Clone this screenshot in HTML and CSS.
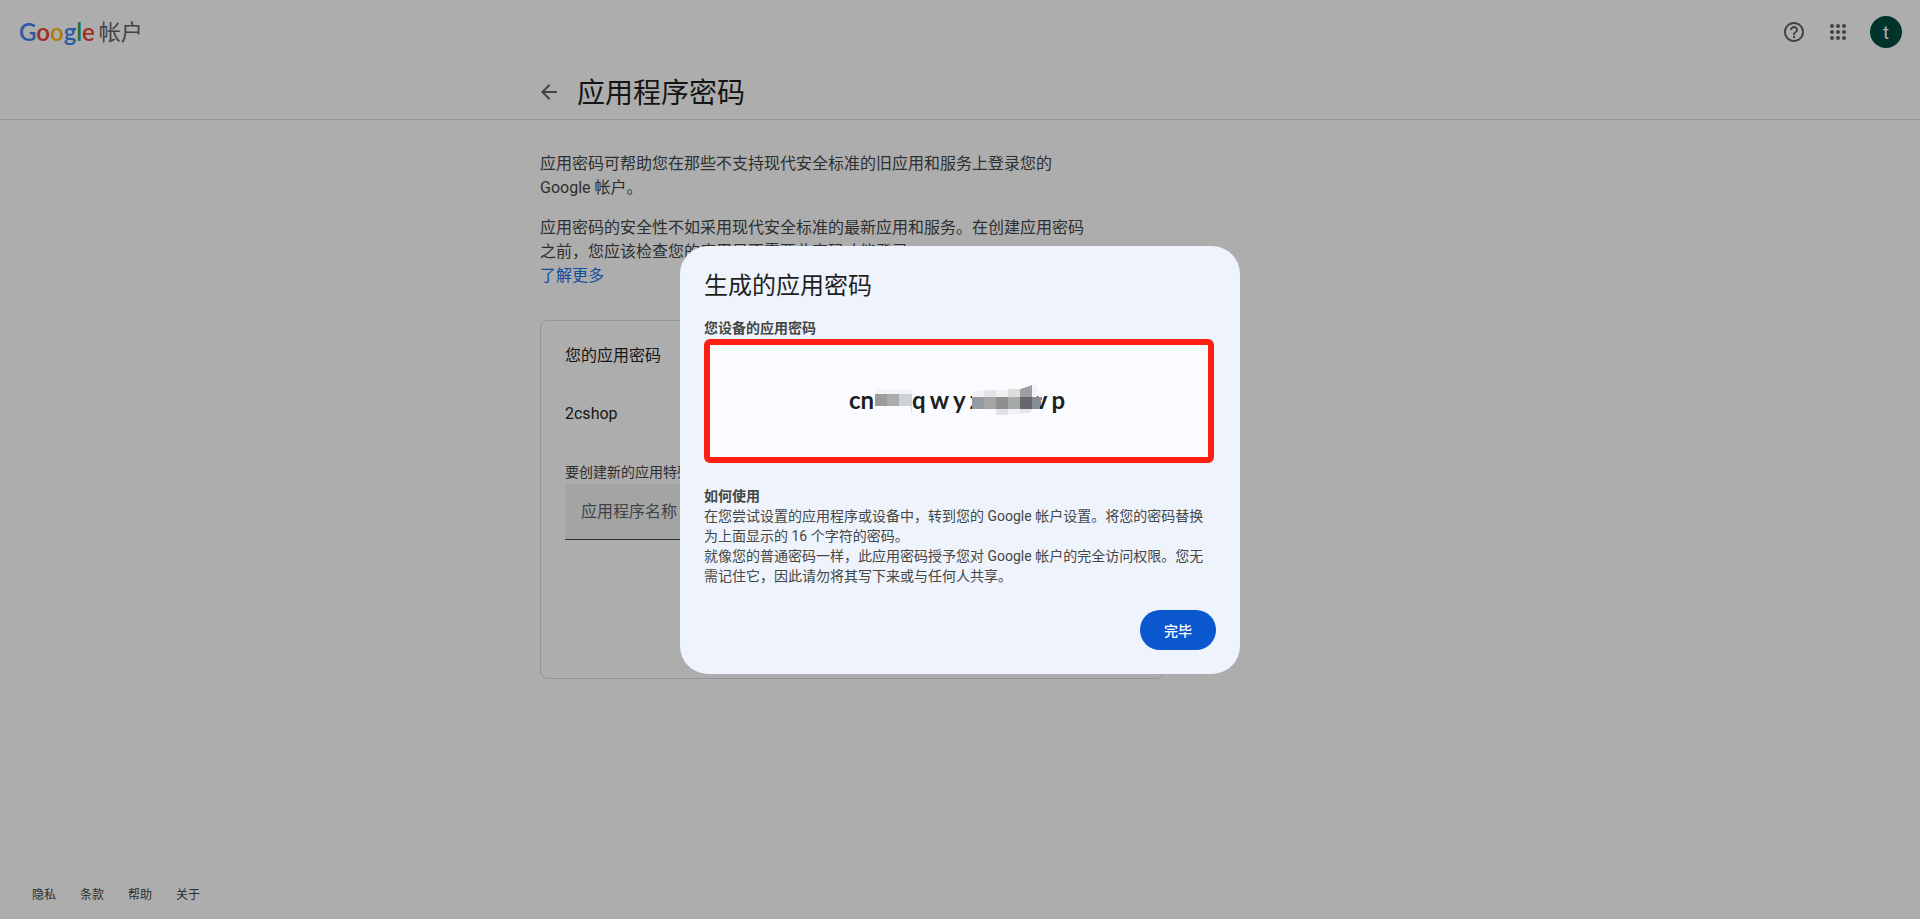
FILE: index.html
```
<!DOCTYPE html>
<html lang="zh-CN">
<head>
  <meta charset="UTF-8" />
  <meta name="viewport" content="width=device-width, initial-scale=1.0" />
  <title>应用程序密码</title>
  <link rel="stylesheet" href="styles.css">
</head>
<body>
  <header>
    <div class="topbar">
      <a class="brand" href="#">
        <span class="logo"><span class="blue">G</span><span class="red">o</span><span class="yellow">o</span><span class="blue">g</span><span class="green">l</span><span class="red">e</span></span>
        <span class="product">帐户</span>
      </a>
      <div class="actions">
        <button class="icon-btn" aria-label="帮助">
          <svg width="24" height="24" viewBox="0 0 24 24"><path d="M11 18h2v-2h-2v2zm1-16C6.48 2 2 6.48 2 12s4.480 10 10 10 10-4.480 10-10S17.520 2 12 2zm0 18c-4.410 0-8-3.590-8-8s3.590-8 8-8 8 3.590 8 8-3.590 8-8 8zm0-14c-2.210 0-4 1.790-4 4h2c0-1.100.9-2 2-2s2 .9 2 2c0 2-3 1.750-3 5h2c0-2.250 3-2.500 3-5 0-2.210-1.790-4-4-4z"/></svg>
        </button>
        <button class="icon-btn" aria-label="Google 应用">
          <svg width="24" height="24" viewBox="0 0 24 24"><circle cx="6" cy="6" r="2"/><circle cx="12" cy="6" r="2"/><circle cx="18" cy="6" r="2"/><circle cx="6" cy="12" r="2"/><circle cx="12" cy="12" r="2"/><circle cx="18" cy="12" r="2"/><circle cx="6" cy="18" r="2"/><circle cx="12" cy="18" r="2"/><circle cx="18" cy="18" r="2"/></svg>
        </button>
        <button class="avatar">t</button>
      </div>
    </div>
    <div class="titlebar">
      <a class="back" href="#" aria-label="返回">
        <svg width="24" height="24" viewBox="0 0 24 24"><path d="M20 11H7.830l5.590-5.590L12 4l-8 8 8 8 1.410-1.410L7.830 13H20v-2z"/></svg>
      </a>
      <h1>应用程序密码</h1>
    </div>
  </header>

  <main>
    <div class="intro">
      <p>应用密码可帮助您在那些不支持现代安全标准的旧应用和服务上登录您的 Google 帐户。</p>
      <p>应用密码的安全性不如采用现代安全标准的最新应用和服务。在创建应用密码之前，您应该检查您的应用是否需要此密码才能登录。<br><a href="#">了解更多</a></p>
    </div>

    <section class="card">
      <h2>您的应用密码</h2>
      <div class="app-name">2cshop</div>
      <label for="appName">要创建新的应用特殊密码，请在下方输入相应的名称…</label>
      <input id="appName" type="text" placeholder="应用程序名称">
    </section>
  </main>

  <footer>
    <a href="#">隐私</a>
    <a href="#">条款</a>
    <a href="#">帮助</a>
    <a href="#">关于</a>
  </footer>

  <div class="overlay">
    <div class="dialog" role="dialog" aria-modal="true" aria-labelledby="dialogTitle">
      <h2 id="dialogTitle">生成的应用密码</h2>
      <h3>您设备的应用密码</h3>
      <div class="password">
        <span>cn</span>
        <svg class="mosaic" width="37" height="26" viewBox="0 0 37 26" shape-rendering="crispEdges">
          <path fill="#f3f4f7" d="M0 2h37v5H0z"/>
          <path fill="#9f9b99" d="M0 7h12v12H0z"/>
          <path fill="#acacac" d="M12 7h12v12H12z"/>
          <path fill="#ced2d5" d="M24 7h13v12H24z"/>
          <path fill="#dfe2e6" d="M36 19h1v7h-1z"/>
        </svg>
        <span>q</span>
        <span>w</span>
        <span>y</span>
        <span>z</span>
        <svg class="mosaic mosaic-long" width="74" height="30" viewBox="0 0 74 30" shape-rendering="crispEdges">
          <path fill="#f0f1f4" d="M0 6h12v6H0z"/>
          <path fill="#e4e5e7" d="M12 5h12v7H12z"/>
          <path fill="#eff0f4" d="M24 5h12v7H24z"/>
          <path fill="#dddddc" d="M36 4h12v8H36z"/>
          <path fill="#9f9fa3" d="M48 4l12-4v12H48z"/>
          <path fill="#f2f2f6" d="M60 0h5v12h-5z"/>
          <path fill="#959aa4" d="M0 12h12v12H0z"/>
          <path fill="#a5a5a5" d="M12 12h12v12H12z"/>
          <path fill="#918f8e" d="M24 12h12v12H24z"/>
          <path fill="#a6aaa9" d="M36 12h12v12H36z"/>
          <path fill="#68666d" d="M48 12h12v12H48z"/>
          <path fill="#878b94" d="M60 12h10l-2 12h-8z"/>
          <path fill="#e1e2e6" d="M24 24h12v6H24z"/>
          <path fill="#f1f2f5" d="M36 24h12v5H36z"/>
          <path fill="#e5e6eb" d="M48 24h12l-3 4h-9z"/>
        </svg>
        <span class="under">v</span>
        <span>p</span>
      </div>
      <h3>如何使用</h3>
      <p>在您尝试设置的应用程序或设备中，转到您的 Google 帐户设置。将您的密码替换为上面显示的 16 个字符的密码。</p>
      <p>就像您的普通密码一样，此应用密码授予您对 Google 帐户的完全访问权限。您无需记住它，因此请勿将其写下来或与任何人共享。</p>
      <div class="dialog-actions">
        <button class="done">完毕</button>
      </div>
    </div>
  </div>
</body>
</html>
```
FILE: styles.css
```
* {
  box-sizing: border-box;
}

body {
  font-family: Roboto, 'Noto Sans CJK SC', sans-serif;
  font-size: 16px;
  line-height: 24px;
  background-color: #fff;
  color: #444746;
  margin: 0;
  min-height: 100vh;
  display: flex;
  flex-direction: column;
}

h1, h2, h3, p {
  margin: 0;
  font-weight: 400;
}

a {
  color: #1a73e8;
  text-decoration: none;
}

button {
  border: 0;
  padding: 0;
  font-family: inherit;
  background: none;
  cursor: pointer;
}

svg {
  display: block;
  fill: #5f6368;
}

header {
  border-bottom: 1px solid #dadce0;
}

.topbar {
  display: flex;
  align-items: center;
  justify-content: space-between;
  height: 64px;
  padding: 0 18px;
}

.brand {
  display: flex;
  align-items: center;
  gap: 4px;
  padding-left: 1px;
}

.logo {
  font-family: Lato, sans-serif;
  font-size: 24px;
  font-weight: 600;
}

.blue { color: #4285f4; }
.red { color: #ea4335; }
.yellow { color: #fbbc04; }
.green { color: #34a853; }

.product {
  padding-top: 2px;
  font-size: 22px;
  color: #5f6368;
}

.actions {
  display: flex;
  align-items: center;
  gap: 20px;
}

.avatar {
  width: 32px;
  height: 32px;
  border-radius: 50%;
  background-color: #004d40;
  color: #fff;
  font-size: 18px;
}

.titlebar {
  display: flex;
  align-items: center;
  gap: 16px;
  width: 100%;
  max-width: 840px;
  height: 55px;
  margin: 0 auto;
}

.back {
  margin-left: -3px;
}

h1 {
  padding-top: 4px;
  font-size: 28px;
  line-height: 36px;
  color: #1f1f1f;
}

main {
  flex: 1;
  width: 100%;
  max-width: 840px;
  margin: 0 auto;
  padding-top: 32px;
}

.intro {
  max-width: 552px;
}

.intro p {
  margin-bottom: 16px;
}

.card {
  max-width: 624px;
  min-height: 359px;
  margin-top: 32px;
  padding: 23px 24px;
  border: 1px solid #dadce0;
  border-radius: 8px;
}

.card h2 {
  font-size: 16px;
  color: #1f1f1f;
}

.app-name {
  padding: 34px 0;
  color: #1f1f1f;
}

.card label {
  display: block;
  font-size: 14px;
}

.card input {
  width: 100%;
  height: 56px;
  padding: 0 16px;
  border: 0;
  border-bottom: 1px solid #444746;
  border-radius: 4px 4px 0 0;
  background-color: #f1f3f4;
  font-family: inherit;
  font-size: 16px;
}

.card input::placeholder {
  color: #5f6368;
}

footer {
  display: flex;
  gap: 24px;
  padding: 12px 32px;
  font-size: 12px;
}

footer a {
  color: #444746;
}

.overlay {
  position: fixed;
  inset: 0;
  display: flex;
  align-items: center;
  justify-content: center;
  background-color: rgba(0, 0, 0, 0.32);
}

.dialog {
  width: 560px;
  max-width: 90%;
  padding: 24px;
  border-radius: 28px;
  background-color: #eef3fc;
  font-size: 14px;
  line-height: 20px;
}

.dialog h2 {
  margin-bottom: 16px;
  font-size: 24px;
  line-height: 32px;
  color: #1f1f1f;
}

.dialog h3 {
  font-size: 14px;
  font-weight: 700;
}

.password {
  display: flex;
  align-items: center;
  justify-content: center;
  gap: 4px;
  height: 124px;
  margin: 1px 2px 23px 0;
  padding: 0 4px 2px 0;
  border: 6px solid #ff1f12;
  border-radius: 6px;
  background-color: #f9fbff;
  color: #1f1f1f;
  font-family: Lato, sans-serif;
  font-size: 24px;
  font-weight: 700;
}

.mosaic {
  margin: 0 -4px 0 -3px;
  z-index: 1;
}

.mosaic-long {
  margin-left: -13px;
}

.under {
  margin-left: -11px;
}

.dialog-actions {
  display: flex;
  justify-content: flex-end;
  margin-top: 24px;
}

.done {
  height: 40px;
  padding: 0 24px;
  border-radius: 20px;
  background-color: #0b57d0;
  color: #fff;
  font-size: 14px;
  font-weight: 500;
}
```
